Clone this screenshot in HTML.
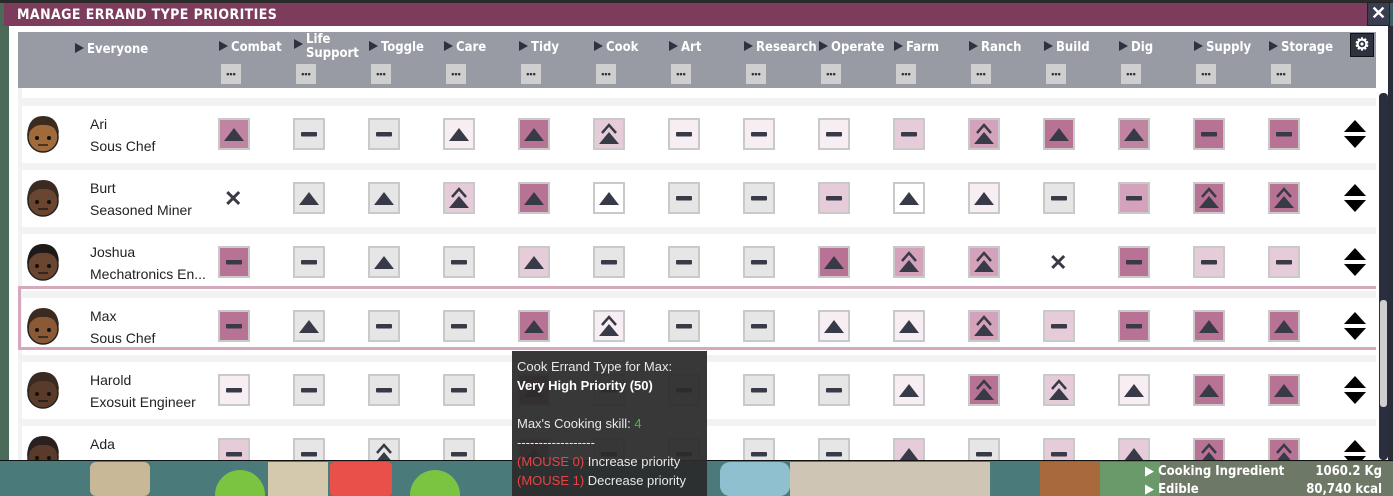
<!DOCTYPE html>
<html><head><meta charset="utf-8"><style>
*{margin:0;padding:0;box-sizing:border-box}
html,body{width:1393px;height:496px;overflow:hidden}
body{position:relative;background:#3d5f62;font-family:"Liberation Sans",sans-serif}
.abs{position:absolute}
.hd{position:absolute;top:40px;color:#fff;font:bold 13px "DejaVu Sans Condensed","Liberation Sans Narrow",sans-serif;white-space:nowrap}
.hd i{display:inline-block;width:0;height:0;border-top:5px solid transparent;border-bottom:5px solid transparent;border-left:9px solid #2e3140;margin-right:3px;vertical-align:0px}
.dots{position:absolute;top:64px;width:20px;height:20px;background:#cfcfcf;color:#2e3140;font:bold 9px sans-serif;text-align:center;line-height:20px}
.nm{position:absolute;left:90px;font-size:14px;color:#222;line-height:22px}
.b{position:absolute;width:32px;height:32px;border:2px solid #c9c9c9}
.tt{position:absolute;left:512px;top:351px;width:195px;height:145px;background:rgba(44,44,44,0.94);color:#e8e8e8;font-size:13px;padding:6px 5px;line-height:19px}
</style></head><body>
<div class="abs" style="left:0;top:460px;width:1393px;height:36px;background:#4a7a7a"></div>
<div class="abs" style="left:90px;top:462px;width:60px;height:34px;background:#c8b898;border-radius:6px"></div>
<div class="abs" style="left:215px;top:470px;width:50px;height:30px;background:#7ac442;border-radius:25px 25px 0 0"></div>
<div class="abs" style="left:330px;top:462px;width:62px;height:34px;background:#e9504a;border-radius:4px"></div>
<div class="abs" style="left:268px;top:462px;width:60px;height:34px;background:#d5c9ad"></div>
<div class="abs" style="left:410px;top:470px;width:50px;height:30px;background:#7ac442;border-radius:25px 25px 0 0"></div>
<div class="abs" style="left:720px;top:462px;width:70px;height:34px;background:#8fc0d0;border-radius:10px"></div>
<div class="abs" style="left:790px;top:462px;width:200px;height:34px;background:#cfc5b5"></div>
<div class="abs" style="left:1040px;top:462px;width:60px;height:34px;background:#a86a3c"></div>
<div class="abs" style="left:1100px;top:462px;width:60px;height:34px;background:#6a9a6a"></div>
<div class="abs" style="left:1160px;top:462px;width:233px;height:34px;background:#6d7866"></div>
<div class="abs" style="left:1145px;top:463px;color:#fff;font:bold 13px 'DejaVu Sans Condensed',sans-serif;line-height:18px">▶ Cooking Ingredient<br>▶ Edible</div>
<div class="abs" style="left:1282px;top:463px;color:#fff;font:bold 13px 'DejaVu Sans Condensed',sans-serif;line-height:18px;text-align:right;width:100px">1060.2 Kg<br>80,740 kcal</div>
<div class="abs" style="left:0;top:460px;width:1393px;height:1px;background:#111"></div>
<div class="abs" style="left:0;top:0;width:1393px;height:460px;overflow:hidden">
<div class="abs" style="left:0;top:0;width:9px;height:460px;background:#4b6a5a"></div>
<div class="abs" style="left:0;top:0;width:1393px;height:3px;background:#2a2a2a"></div>
<div class="abs" style="left:9px;top:26px;width:1380px;height:434px;background:#fff"></div>
<div class="abs" style="left:4px;top:3px;width:1364px;height:23px;background:#7d3c5c"></div>
<div class="abs" style="left:17px;top:5px;color:#fff;font:bold 14px 'DejaVu Sans Condensed',sans-serif;letter-spacing:0.4px;line-height:20px">MANAGE ERRAND TYPE PRIORITIES</div>
<div class="abs" style="left:1367px;top:2px;width:23px;height:24px;background:#3b3e50;border:1px solid #222;color:#fff;font:bold 18px sans-serif;text-align:center;line-height:21px">✕</div>
<div class="abs" style="left:1388px;top:26px;width:5px;height:434px;background:#2a2c38"></div>
<div class="abs" style="left:18px;top:32px;width:1358px;height:56px;background:#989ba3"></div>
<div class="hd" style="left:75px;top:42px"><i></i>Everyone</div>
<div id="hdrs"></div>
<div class="abs" style="left:1350px;top:33px;width:24px;height:24px;background:#2e3140;border:1px solid #111;color:#fff;font:bold 17px sans-serif;text-align:center;line-height:21px">⚙</div>
<div class="abs" style="left:18px;top:88px;width:1358px;height:372px;background:#f2f2f2"></div>
<div class="abs" style="left:22px;top:88px;width:1354px;height:10px;background:#fff"></div>
<div id="rows"></div>
<div class="abs" style="left:1379px;top:93px;width:9px;height:367px;background:#2b2e3e;border-radius:4px"></div>
<div class="abs" style="left:1380px;top:300px;width:7px;height:107px;background:#cfcfcf;border-radius:3px"></div>
<div class="nm" style="top:113px">Ari<br>Sous Chef</div>
<div class="nm" style="top:177px">Burt<br>Seasoned Miner</div>
<div class="nm" style="top:241px">Joshua<br>Mechatronics En...</div>
<div class="nm" style="top:305px">Max<br>Sous Chef</div>
<div class="nm" style="top:369px">Harold<br>Exosuit Engineer</div>
<div class="nm" style="top:433px">Ada</div>
</div>
<div class="tt">Cook Errand Type for Max:<br><b style="color:#fff">Very High Priority (50)</b><br><br>Max's Cooking skill: <span style="color:#3fbf2f">4</span><br>------------------<br><span style="color:#e84444">(MOUSE 0)</span> Increase priority<br><span style="color:#e84444">(MOUSE 1)</span> Decrease priority</div>
<script>
var cols=["Combat","Life Support","Toggle","Care","Tidy","Cook","Art","Research","Operate","Farm","Ranch","Build","Dig","Supply","Storage"];
var h="";
cols.forEach(function(c,i){var cx=234+75*i;
 if(c=="Life Support")h+='<div class="hd" style="left:'+(cx-15)+'px;top:33px;line-height:14px"><i style="vertical-align:-6px"></i><span style="display:inline-block;vertical-align:top">Life<br>Support</span></div>';
 else h+='<div class="hd" style="left:'+(cx-15)+'px"><i></i>'+c+'</div>';
 h+='<div class="dots" style="left:'+(cx-13)+'px">•••</div>';});
document.getElementById("hdrs").innerHTML=h;
var C={D:"#b87394",E:"#c084a0",M:"#e6ccd9",m:"#d4a3bb",L:"#f7eef3",G:"#e6e6e6",W:"#fff"};
var R=[
"Eu G- G- Lu Du MU L- L- L- M- mU Du Eu D- D-",
"X Gu Gu MU Du Wu G- G- M- Wu Lu G- m- DU DU",
"D- G- Gu G- Mu G- G- G- Du mU mU X D- M- M-",
"D- Gu G- G- Du LU G- G- Lu Lu mU M- D- Du Du",
"L- G- G- G- Du G- G- G- G- Lu DU MU Lu Du Du",
"M- G- GU G- Du G- G- G- G- Mu G- M- Mu DU DU"];
var face=["#3b2a20","#3b2a20","#1e1a1a","#3b2a20","#3b2a20","#2a2020"];
var skin=["#a06a3a","#6a4630","#6a4630","#8a5a36","#5a3a28","#5a3a28"];
var o="";
R.forEach(function(r,ri){var y0=106+64*ri;
 o+='<div class="abs" style="left:22px;top:'+y0+'px;width:1354px;height:57px;background:#fff"></div>';
 if(ri==3){o+='<div class="abs" style="left:18px;top:'+(y0-12)+'px;width:1358px;height:3px;background:#d7a7be"></div><div class="abs" style="left:18px;top:'+(y0+49)+'px;width:1358px;height:3px;background:#d7a7be"></div><div class="abs" style="left:18px;top:'+(y0-12)+'px;width:3px;height:64px;background:#d7a7be"></div>';}
 o+='<svg class="abs" style="left:22px;top:'+(y0+6)+'px" width="42" height="44"><ellipse cx="21" cy="25" rx="15" ry="15" fill="'+skin[ri]+'" stroke="#222" stroke-width="1.5"/><path d="M5 24 Q6 4 21 4 Q36 4 37 22 Q31 12 21 13 Q11 12 5 24Z" fill="'+face[ri]+'"/><circle cx="15" cy="26" r="2" fill="#111"/><circle cx="27" cy="26" r="2" fill="#111"/><path d="M16 33 H26" stroke="#111" stroke-width="1.2"/></svg>';
 var yc=y0+28;
 r.split(" ").forEach(function(t,ci){var cx=234+75*ci;
  if(t=="X"){o+='<div class="abs" style="left:'+(cx-10)+'px;top:'+(yc-12)+'px;font:bold 22px sans-serif;color:#3a3a46">✕</div>';return;}
  var c=C[t[0]],s=t[1];
  var ic='<svg width="28" height="28" style="position:absolute;left:0;top:0">';
  if(s=="u")ic+='<path d="M4 21 L14 8 L24 21Z" fill="#393a48"/>';
  else if(s=="-")ic+='<rect x="6" y="12" width="16" height="4.5" rx="1" fill="#393a48"/>';
  else ic+='<path d="M7 13 L14 5 L21 13" fill="none" stroke="#393a48" stroke-width="2.5"/><path d="M4 24 L14 12 L24 24Z" fill="#393a48"/>';
  ic+='</svg>';
  o+='<div class="b" style="left:'+(cx-16)+'px;top:'+(yc-16)+'px;background:'+c+'">'+ic+'</div>';});
 o+='<svg class="abs" style="left:1343px;top:'+(yc-15)+'px" width="24" height="30"><path d="M1 13 L12 1 L23 13Z M1 17 L23 17 L12 29Z" fill="#000"/></svg>';
});
document.getElementById("rows").innerHTML=o;
</script>
</body></html>
